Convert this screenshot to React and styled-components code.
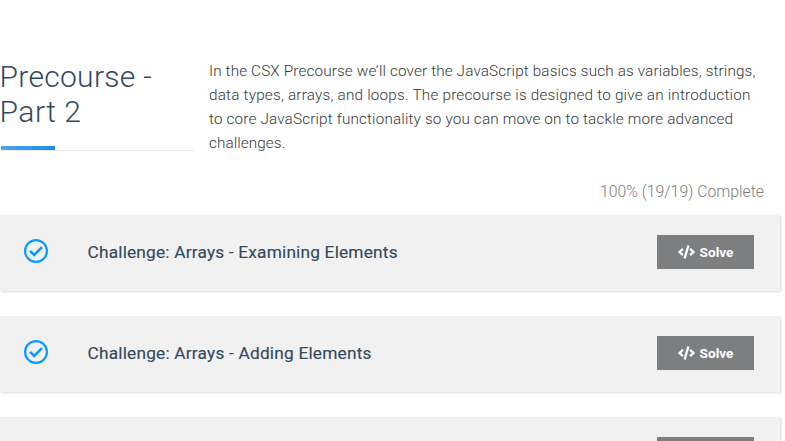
import React from 'react';
import styled, { createGlobalStyle } from 'styled-components';
import { FaCode } from 'react-icons/fa';

const GlobalStyle = createGlobalStyle`
  * { box-sizing: border-box; }
  html, body { margin: 0; overflow: hidden; background: #fff; }
  body { font-family: Roboto, "Open Sans", sans-serif; font-weight: 300; }
`;

const Page = styled.main`
  width: 785px;
  height: 441px;
  overflow: hidden;
  padding-top: 59px;
`;

const Header = styled.header`
  display: flex;
  gap: 15px;
  height: 114px;
`;

const TitleBlock = styled.div`
  width: 194px;
  height: 92px;
  padding-left: 1px;
`;

const Title = styled.h1`
  margin: 0 0 0 -1.5px;
  height: 87px;
  font-size: 30px;
  line-height: 35px;
  font-weight: 300;
  color: #34495e;
`;

const Line = styled.span`
  display: block;
  white-space: nowrap;
  letter-spacing: ${({ $spacing }) => $spacing || 0}px;
`;

const Rule = styled.div`
  height: 5px;
  border-bottom: 1px solid #eaeaea;
`;

const RuleAccent = styled.div`
  width: 54px;
  height: 4px;
  background: linear-gradient(90deg, #4ea3ea, #1f8ce8);
`;

const Description = styled.p`
  margin: 0;
  font-size: 15.3px;
  line-height: 24px;
  color: #383838;
`;

const Progress = styled.div`
  height: 42px;
  padding-right: 21px;
  padding-top: 7px;
  text-align: right;
  font-size: 15.8px;
  line-height: 24px;
  color: #7c7c7c;
`;

const List = styled.div`
  display: flex;
  flex-direction: column;
  gap: 25px;
  width: 780px;
`;

const Card = styled.article`
  display: flex;
  align-items: flex-start;
  flex: none;
  height: 76px;
  padding: 20px 26px 0 24px;
  background: #f1f1f1;
  box-shadow: 1px 1px 2px rgba(0, 0, 0, 0.15);
`;

const Check = styled.svg`
  width: 24px;
  height: 24px;
  margin-top: 4px;
  flex: none;
`;

const CardTitle = styled.h2`
  flex: 1;
  margin: 0 0 0 39.5px;
  font-size: 17.3px;
  line-height: 34px;
  font-weight: 400;
  color: #34495e;
  -webkit-text-stroke: 0.15px #34495e;
`;

const SolveButton = styled.button`
  display: flex;
  align-items: center;
  justify-content: center;
  gap: 5px;
  width: 97px;
  height: 34px;
  padding: 0;
  border: 0;
  background: #7d7e7f;
  color: #fff;
  font: 700 13.6px/34px Roboto, sans-serif;
`;

const CodeIcon = styled(FaCode)`
  width: 17px;
  height: 14px;
  margin-top: -1px;
`;

const challenges = [
  { name: 'Challenge: Arrays - Examining Elements', spacing: 0.19 },
  { name: 'Challenge: Arrays - Adding Elements', spacing: 0.2 },
  { name: '', spacing: 0 },
];

function CheckIcon() {
  return (
    <Check viewBox="0 0 24 24" fill="none" stroke="#0a99ff">
      <circle cx="12" cy="12" r="10.9" strokeWidth="2.2" />
      <path d="M6 11.8l4.2 4.2L18 8.2" strokeWidth="2.6" />
    </Check>
  );
}

export default function App() {
  return (
    <Page>
      <GlobalStyle />
      <Header>
        <TitleBlock>
          <Title>
            <Line $spacing={0.3}>Precourse -</Line>
            <Line $spacing={0.5}>Part 2</Line>
          </Title>
          <Rule><RuleAccent /></Rule>
        </TitleBlock>
        <Description>
          <Line $spacing={0.13}>In the CSX Precourse we’ll cover the JavaScript basics such as variables, strings,</Line>
          <Line $spacing={0.2}>data types, arrays, and loops. The precourse is designed to give an introduction</Line>
          <Line $spacing={0.15}>to core JavaScript functionality so you can move on to tackle more advanced</Line>
          <Line $spacing={0.08}>challenges.</Line>
        </Description>
      </Header>
      <Progress><Line>100% (19/19) Complete</Line></Progress>
      <List>
        {challenges.map(({ name, spacing }, i) => (
          <Card key={i}>
            <CheckIcon />
            <CardTitle><Line $spacing={spacing}>{name}</Line></CardTitle>
            <SolveButton>{name && <><CodeIcon />Solve</>}</SolveButton>
          </Card>
        ))}
      </List>
    </Page>
  );
}
